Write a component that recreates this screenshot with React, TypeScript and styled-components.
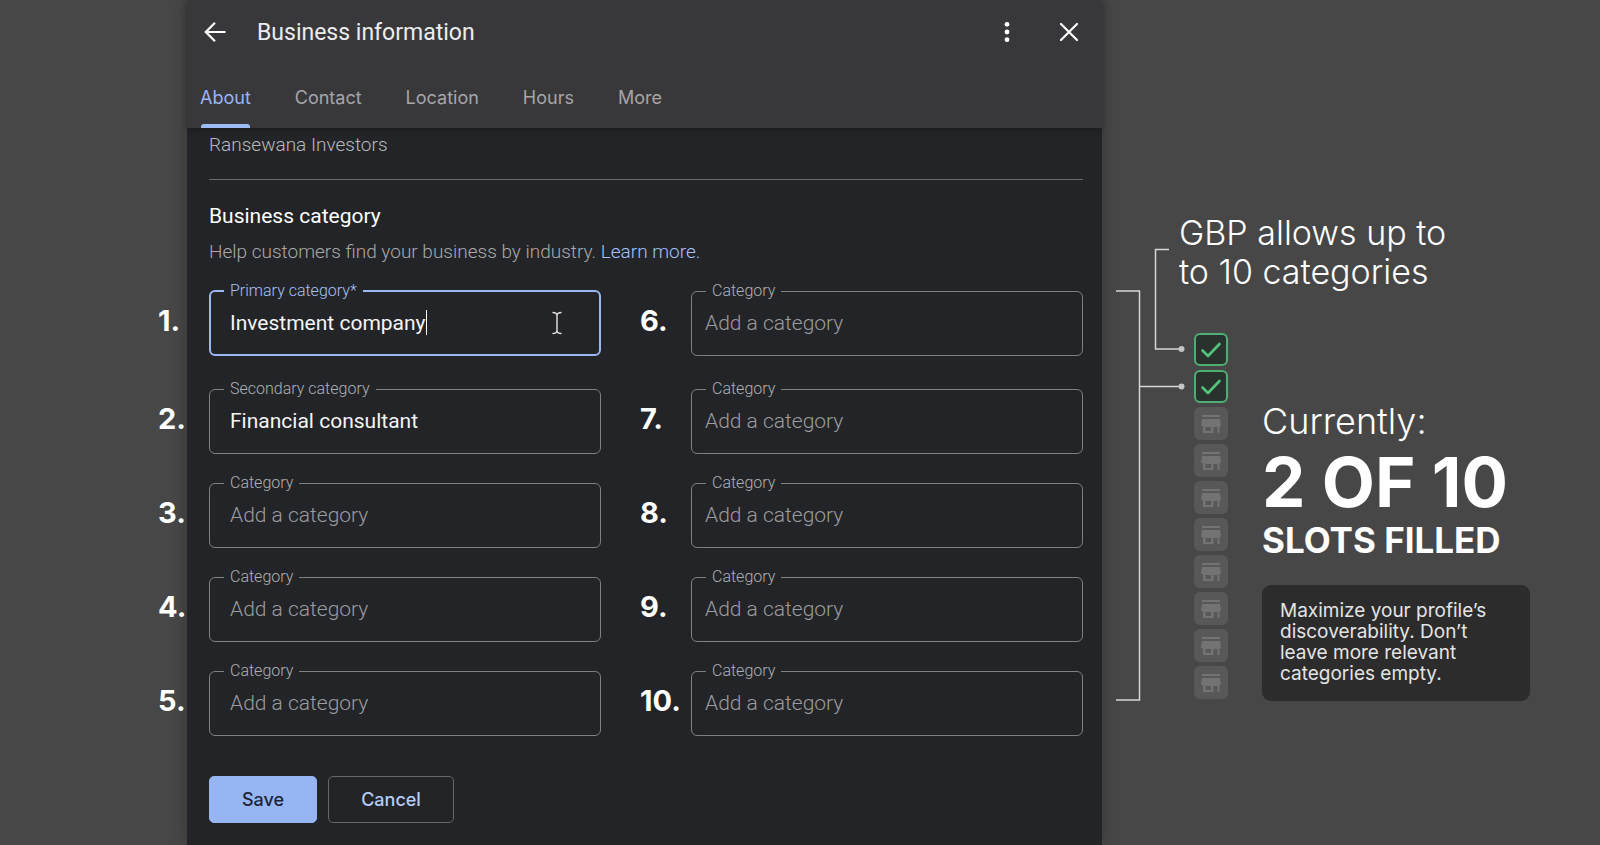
import React from "react";
import styled, { createGlobalStyle } from "styled-components";

const ui = `Inter, "Open Sans", sans-serif`;
const body = `Roboto, "Noto Sans", sans-serif`;

const GlobalStyle = createGlobalStyle`
  *, *::before, *::after { box-sizing: border-box; }
  body { margin: 0; background: #474747; color: #fff; font-family: ${body}; }
`;

const Page = styled.main`
  display: grid;
  grid-template-columns: 187fr 915fr 498fr;
  min-height: 100vh;
  overflow-x: hidden;
`;

const Panel = styled.section`
  grid-column: 2;
  background: #232428;
  box-shadow: 0 0 16px rgba(0, 0, 0, 0.25);
`;

const Header = styled.header`
  background: #38383b;
  box-shadow: 0 1px 6px rgba(0, 0, 0, 0.3);
`;

const TitleBar = styled.div`
  display: flex;
  align-items: center;
  gap: 22px;
  height: 64px;
  padding: 0 13px 0 8px;
`;

const Title = styled.h1`
  flex: 1;
  margin: 0;
  padding-top: 2px;
  font: 400 23px/32px ${body};
  color: #ececed;
`;

const IconButton = styled.button`
  display: grid;
  place-items: center;
  width: 40px;
  height: 40px;
  padding: 0;
  border: 0;
  background: none;
  color: #fff;
`;

const Tabs = styled.nav`
  display: flex;
  gap: 44px;
  height: 64px;
  padding-left: 13px;
`;

const Tab = styled.a<{ $active?: boolean }>`
  display: flex;
  flex-direction: column;
  justify-content: space-between;
  padding-top: 22px;
  font: 400 18px/24px ${ui};
  text-decoration: none;
  color: ${(p) => (p.$active ? "#9ab4f2" : "#a6a6a8")};

  &::after {
    content: "";
    height: 4px;
    margin: 0 1px;
    border-radius: 3px 3px 0 0;
    background: ${(p) => (p.$active ? "#9dbcf5" : "transparent")};
  }
`;

const Form = styled.form`
  padding: 5px 19px 22px 22px;
`;

const BusinessName = styled.p`
  margin: 0;
  padding-bottom: 22px;
  border-bottom: 1px solid #6a6b6e;
  font-size: 19px;
  font-weight: 300;
  line-height: 24px;
  color: #b8b9bc;
`;

const SectionTitle = styled.h2`
  margin: 22px 0 0;
  font-size: 21px;
  font-weight: 400;
  line-height: 28px;
`;

const Help = styled.p`
  margin: 10px 0 0;
  font-size: 19px;
  font-weight: 300;
  line-height: 24px;
  color: #a8a9ac;
`;

const HelpLink = styled.a`
  color: #a4c2f8;
  text-decoration: none;
`;

const Columns = styled.div`
  display: grid;
  grid-template-columns: 1fr 1fr;
  gap: 39px;
  margin: 18px 0 0 -51px;
`;

const SlotList = styled.ol`
  display: flex;
  flex-direction: column;
  gap: 20px;
  margin: 0;
  padding: 0;
  list-style: none;

  & > li:first-child { margin-bottom: 4px; }
`;

const SlotRow = styled.li`
  display: grid;
  grid-template-columns: 51px minmax(0, 1fr);
  height: 74px;
`;

const Num = styled.span`
  padding-top: 19px;
  font: 700 29px/40px ${ui};
  white-space: nowrap;
  z-index: 1;
`;

const Field = styled.fieldset<{ $focused?: boolean; $inset: number }>`
  display: flex;
  align-items: center;
  min-width: 0;
  height: 74px;
  margin: 0;
  padding: 0 36px 9px ${(p) => p.$inset}px;
  border: ${(p) => (p.$focused ? "2px solid #9ab8f2" : "1px solid #7f8083")};
  border-radius: 6px;
`;

const Legend = styled.legend<{ $focused?: boolean; $pull: number }>`
  margin-left: ${(p) => p.$pull}px;
  padding: 0 6px;
  font-size: 16px;
  font-weight: 300;
  line-height: 18px;
  color: ${(p) => (p.$focused ? "#a4c2f8" : "#b0b1b4")};
`;

const TextInput = styled.input<{ $hug?: boolean }>`
  ${(p) => (p.$hug ? "field-sizing: content;" : "width: 100%;")}
  min-width: 0;
  height: 32px;
  margin: 0;
  padding: 0;
  border: 0;
  outline: 0;
  background: none;
  color: #f4f4f5;
  font: 400 21px/32px ${body};

  &::placeholder { color: #9b9c9f; opacity: 1; font-weight: 300; }
`;

const Caret = styled.span`
  width: 1px;
  height: 25px;
  background: #fff;
`;

const Pointer = styled.svg`
  margin-left: auto;
`;

const Actions = styled.div`
  display: flex;
  gap: 11px;
  margin-top: 40px;
`;

const Action = styled.button<{ $primary?: boolean }>`
  width: ${(p) => (p.$primary ? 108 : 126)}px;
  height: 47px;
  padding: 0;
  border: 1px solid ${(p) => (p.$primary ? "#98b5f3" : "#66676a")};
  border-radius: 5px;
  background: ${(p) => (p.$primary ? "#98b5f3" : "transparent")};
  color: ${(p) => (p.$primary ? "#1c2438" : "#b5ccf8")};
  font: 500 18px/24px ${ui};
`;

const Notes = styled.aside`
  display: grid;
  grid-template-columns: 77px minmax(0, 1fr);
  align-content: start;
  padding-top: 213px;
  color: #fff;
  font-family: ${ui};
`;

const Connectors = styled.svg`
  grid-row: 1 / 3;
  overflow: visible;
`;

const Limit = styled.h2`
  margin: 0;
  font-size: 34px;
  font-weight: 300;
  line-height: 39px;
`;

const Status = styled.div`
  display: flex;
  gap: 34px;
  margin: 42px 0 0 15px;
`;

const Meter = styled.ul`
  display: flex;
  flex-direction: column;
  gap: 4px;
  margin: 0;
  padding: 0;
  list-style: none;
`;

const Slot = styled.li<{ $filled?: boolean }>`
  display: grid;
  place-items: center;
  width: 34px;
  height: 33px;
  border-radius: 6px;
  border: ${(p) => (p.$filled ? "2px solid #4fae73" : "0")};
  background: ${(p) => (p.$filled ? "#2a322d" : "#585858")};
`;

const Summary = styled.div`
  padding-top: 66px;
`;

const Currently = styled.p`
  margin: 0;
  font-size: 36px;
  font-weight: 300;
  line-height: 44px;
`;

const Count = styled.p`
  margin: 0;
  font-size: 69px;
  font-weight: 700;
  line-height: 78px;
`;

const Filled = styled.p`
  margin: 0;
  font-size: 35px;
  font-weight: 700;
  line-height: 38px;
`;

const Tip = styled.p`
  width: 268px;
  margin: 26px 0 0;
  padding: 15px 40px 17px 18px;
  border-radius: 9px;
  background: #2c2c2c;
  color: #e4e4e4;
  font-size: 19px;
  font-weight: 400;
  line-height: 21px;
`;

type Entry = { label: string; value?: string; focused?: boolean };

const entries: Entry[] = [
  { label: "Primary category*", value: "Investment company", focused: true },
  { label: "Secondary category", value: "Financial consultant" },
  ...Array.from({ length: 8 }, () => ({ label: "Category" })),
];

const CategoryList = ({ from, inset }: { from: number; inset: number }) => (
  <SlotList start={from + 1}>
    {entries.slice(from, from + 5).map((e, i) => {
      const n = from + i + 1;
      const pad = e.focused ? inset - 1 : inset;
      return (
        <SlotRow key={n}>
          <Num>{n}.</Num>
          <Field $focused={e.focused} $inset={pad}>
            <Legend $focused={e.focused} $pull={14 - inset}>
              <label htmlFor={`category-${n}`}>{e.label}</label>
            </Legend>
            <TextInput
              id={`category-${n}`}
              $hug={e.focused}
              defaultValue={e.value}
              placeholder="Add a category"
            />
            {e.focused && (
              <>
                <Caret />
                <Pointer width="12" height="24" viewBox="0 0 12 24" fill="none" stroke="#e4e4e4" strokeWidth="1.4" aria-hidden="true">
                  <path d="M1.5 1.5C4 1.5 6 2 6 4.5V19.5C6 22 4 22.5 1.5 22.5M10.5 1.5C8 1.5 6 2 6 4.5M6 19.5C6 22 8 22.5 10.5 22.5" />
                </Pointer>
              </>
            )}
          </Field>
        </SlotRow>
      );
    })}
  </SlotList>
);

const Check = () => (
  <svg width="22" height="18" viewBox="0 0 22 18" fill="none" stroke="#52c47c" strokeWidth="2.6" strokeLinecap="round" strokeLinejoin="round" aria-hidden="true">
    <path d="M2.5 9.5L8 15L19.5 3" />
  </svg>
);

const Store = () => (
  <svg width="22" height="20" viewBox="0 0 22 20" fill="#737373" aria-hidden="true">
    <path d="M2 1H20V3H2ZM2 5H20L21 12H19.5V19H17.5V13H13.5V19H3V12H1ZM5.500 13V17H11V13Z" fillRule="evenodd" />
  </svg>
);

export default function App() {
  return (
    <>
      <GlobalStyle />
      <Page>
        <Panel>
          <Header>
            <TitleBar>
              <IconButton aria-label="Back">
                <svg width="24" height="24" viewBox="0 0 24 24" fill="none" stroke="currentColor" strokeWidth="2.2">
                  <path d="M22.5 12H3M12 2.8L2.8 12L12 21.2" />
                </svg>
              </IconButton>
              <Title>Business information</Title>
              <IconButton aria-label="More options">
                <svg width="24" height="24" viewBox="0 0 24 24" fill="currentColor">
                  <circle cx="12" cy="4.3" r="2.4" />
                  <circle cx="12" cy="12" r="2.4" />
                  <circle cx="12" cy="19.7" r="2.4" />
                </svg>
              </IconButton>
              <IconButton aria-label="Close">
                <svg width="24" height="24" viewBox="0 0 24 24" fill="none" stroke="currentColor" strokeWidth="2.2" strokeLinecap="round">
                  <path d="M4 4L20 20M20 4L4 20" />
                </svg>
              </IconButton>
            </TitleBar>
            <Tabs>
              <Tab href="#about" $active>About</Tab>
              <Tab href="#contact">Contact</Tab>
              <Tab href="#location">Location</Tab>
              <Tab href="#hours">Hours</Tab>
              <Tab href="#more">More</Tab>
            </Tabs>
          </Header>
          <Form onSubmit={(e) => e.preventDefault()}>
            <BusinessName>Ransewana Investors</BusinessName>
            <SectionTitle>Business category</SectionTitle>
            <Help>
              Help customers find your business by industry. <HelpLink href="#learn">Learn more.</HelpLink>
            </Help>
            <Columns>
              <CategoryList from={0} inset={20} />
              <CategoryList from={5} inset={13} />
            </Columns>
            <Actions>
              <Action type="submit" $primary>Save</Action>
              <Action type="button">Cancel</Action>
            </Actions>
          </Form>
        </Panel>
        <Notes>
          <Connectors width="77" height="488" viewBox="0 0 77 488" fill="none" stroke="#d6d6d6" strokeWidth="1.5" aria-hidden="true">
            <path d="M14 78H37.5V487H14M37.5 173.5H79" />
            <path d="M67 36.5H53.5V136H79" />
            <circle cx="79.5" cy="136" r="3" fill="#c4c4c4" stroke="none" />
            <circle cx="79.5" cy="173.5" r="3" fill="#c4c4c4" stroke="none" />
          </Connectors>
          <Limit>GBP allows up to<br />to 10 categories</Limit>
          <Status>
            <Meter aria-label="Category slots">
              {entries.map((e, i) => (
                <Slot key={i} $filled={!!e.value}>{e.value ? <Check /> : <Store />}</Slot>
              ))}
            </Meter>
            <Summary>
              <Currently>Currently:</Currently>
              <Count>2 OF 10</Count>
              <Filled>SLOTS FILLED</Filled>
              <Tip>Maximize your profile’s discoverability. Don’t leave more relevant categories empty.</Tip>
            </Summary>
          </Status>
        </Notes>
      </Page>
    </>
  );
}
